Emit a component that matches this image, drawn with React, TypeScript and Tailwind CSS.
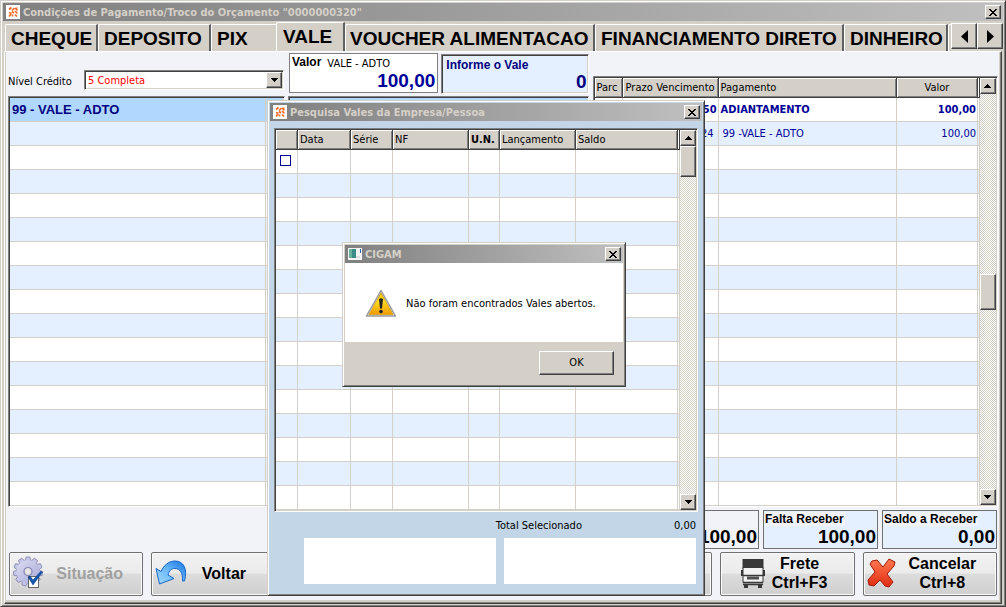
import React, { useState } from 'react';

const raised =
  'border border-t-white border-l-white border-r-[#404040] border-b-[#404040] shadow-[inset_-1px_-1px_0_#808080] bg-[#d4d0c8]';
const sunken =
  'border border-t-[#808080] border-l-[#808080] border-r-white border-b-white shadow-[inset_1px_1px_0_#404040,inset_-1px_-1px_0_#d4d0c8] p-px';
const frame =
  'border border-t-[#d4d0c8] border-l-[#d4d0c8] border-r-[#404040] border-b-[#404040] shadow-[inset_1px_1px_0_#fff,inset_-1px_-1px_0_#808080] p-[2px]';
const ui = "font-['DejaVu_Sans_Condensed','DejaVu_Sans',sans-serif] text-[11px] leading-[14px]";

const TABS = [
  { name: 'CHEQUE', size: 'w-[93px] pl-[5px]' },
  { name: 'DEPOSITO', size: 'w-[113px] pl-[5px]' },
  { name: 'PIX', size: 'w-[65px] pl-[5px]' },
  { name: 'VALE', size: 'w-[69px] pl-[6px]' },
  { name: 'VOUCHER ALIMENTACAO', size: 'w-[250px] pl-[4px]' },
  { name: 'FINANCIAMENTO DIRETO', size: 'w-[249px] pl-[5px]' },
  { name: 'DINHEIRO', size: 'w-[104px] pl-[5px]' },
];

const Arrow = ({ dir }: { dir: 'up' | 'down' }) => (
  <svg width="7" height="4" viewBox="0 0 7 4" shapeRendering="crispEdges">
    <path d={dir === 'up' ? 'M3 0h1v1h1v1h1v1h1v1H0V3h1V2h1V1h1z' : 'M0 0h7v1H6v1H5v1H4v1H3V3H2V2H1V1H0z'} />
  </svg>
);

const AppLogo = () => (
  <svg width="14" height="14" viewBox="0 0 14 14" className="shrink-0">
    <rect width="14" height="14" fill="#fff" />
    <g stroke="#f26a24" strokeWidth="1.7" fill="none">
      <path d="M3 4.500 5.500 2.500M6 5.500l2.500-2.500M9 3l2.500 2.500M3 7.500l2.500 1M6 6.500l2 1.500M9 6l2.500 2.500M3 11.500l2-2.500M6.500 11.500V9.500M9 9.500l2 2M11 2.500v1" />
    </g>
  </svg>
);

const CloseButton = () => (
  <button aria-label="Fechar" className={`${raised} w-4 h-[14px] flex items-center justify-center shrink-0`}>
    <svg width="8" height="7" viewBox="0 0 8 7" shapeRendering="crispEdges">
      <path d="M0 0h2v1h1v1h2V1h1V0h2v1H7v1H6v1H5v1h1v1h1v1h1v1H6V6H5V5H3v1H2v1H0V6h1V5h1V4h1V3H2V2H1V1H0z" />
    </svg>
  </button>
);

const TitleBar = ({ title, icon }: { title: string; icon: React.ReactNode }) => (
  <div className="h-[18px] shrink-0 flex items-center gap-[3px] pl-[3px] pr-[2px] bg-linear-to-r from-[#808080] to-[#c0c0c0]">
    {icon}
    <h2 className={`${ui} flex-1 pt-[2px] font-bold text-[#d4d0c8] whitespace-nowrap`}>{title}</h2>
    <CloseButton />
  </div>
);

const ScrollBar = ({ middle }: { middle?: boolean }) => (
  <div className="w-4 shrink-0 flex flex-col bg-[repeating-conic-gradient(#fff_0_25%,#d4d0c8_0_50%)] bg-[length:2px_2px]">
    <button aria-label="Subir" className={`${raised} h-4 flex items-center justify-center`}><Arrow dir="up" /></button>
    {middle && <div className="flex-1" />}
    <div className={middle ? `${raised} h-9` : `${raised} h-[31px]`} />
    <div className="flex-1" />
    <button aria-label="Descer" className={`${raised} h-4 flex items-center justify-center`}><Arrow dir="down" /></button>
  </div>
);

const Th = ({ children, align = 'text-left pl-[2px]' }: { children?: React.ReactNode; align?: string }) => (
  <th className={`h-5 p-0 font-normal bg-[#d4d0c8] border-b border-r border-[#404040] shadow-[inset_1px_1px_0_#fff,inset_-1px_-1px_0_#808080] whitespace-nowrap ${align}`}>
    {children}
  </th>
);

const cell = 'h-6 p-0 border-b border-r border-[#d4d0c8]';

const EmptyRows = ({ count, cols, startOdd }: { count: number; cols: number; startOdd?: boolean }) => (
  <>
    {Array.from({ length: count }, (_, r) => (
      <tr key={r} className={(r % 2 === 1) === !startOdd ? 'bg-white' : 'bg-[#e4f0ff]'}>
        {Array.from({ length: cols }, (_, c) => <td key={c} className={cell} />)}
      </tr>
    ))}
  </>
);

const PaymentsTable = () => (
  <div className={`${sunken} flex-1 min-h-0 flex bg-white overflow-hidden`}>
    <div className="flex-1 overflow-hidden">
      <table className={`${ui} w-full table-fixed border-separate border-spacing-0 text-[#000099]`}>
        <colgroup>
          <col className="w-7" /><col className="w-24" />
          <col /><col className="w-[81px]" /><col className="w-[2px]" />
        </colgroup>
        <thead className="text-black">
          <tr>
            <Th>Parc</Th>
            <Th>
              <span className="flex justify-between pl-px pr-[3px]"><span>Prazo</span><span>Vencimento</span></span>
            </Th>
            <Th>Pagamento</Th>
            <Th align="text-center">Valor</Th>
            <Th align="" />
          </tr>
        </thead>
        <tbody>
          <tr className="bg-white font-bold">
            <td className={cell} />
            <td className={`${cell} text-right pr-px`}>50</td>
            <td className={`${cell} pl-[2px]`}>ADIANTAMENTO</td>
            <td className={`${cell} text-right pr-px`}>100,00</td>
            <td className={cell} />
          </tr>
          <tr className="bg-[#e4f0ff]">
            <td className={cell} />
            <td className={`${cell} text-right pr-1`}>24</td>
            <td className={`${cell} pl-1`}>99 -VALE - ADTO</td>
            <td className={`${cell} text-right pr-px`}>100,00</td>
            <td className={cell} />
          </tr>
          <EmptyRows count={16} cols={5} startOdd />
        </tbody>
      </table>
    </div>
    <ScrollBar middle />
  </div>
);

const AmountBox = ({ label, value, tint }: { label: string; value: string; tint?: boolean }) => (
  <div className={`w-[115px] border border-[#707070] px-px pb-px flex flex-col justify-between ${tint ? 'bg-[#e4f0ff]' : ''}`}>
    <span className="text-xs leading-4 font-bold whitespace-nowrap">
      {label && <span className="bg-[#f2f3f9] pr-px">{label}</span>}
    </span>
    <output className="text-[19px] leading-5 font-bold text-right">{value}</output>
  </div>
);

interface ActionButtonProps {
  icon?: React.ReactNode;
  children?: React.ReactNode;
  disabled?: boolean;
  pad?: string;
}

const ActionButton = ({ icon, children, disabled, pad = '' }: ActionButtonProps) => (
  <button
    disabled={disabled}
    className={`min-w-0 flex items-center pb-[2px] border border-[#707070] rounded-[2px] shadow-[inset_0_0_0_1px_#fafafa] bg-[linear-gradient(#f2f2f2,#ebebeb_48%,#dcdcdc_50%,#cfcfcf)] font-bold text-base leading-[19px] disabled:text-[#a0a0a0] ${pad}`}
  >
    {icon}
    <span className="flex-1">{children}</span>
  </button>
);

const GearIcon = () => (
  <svg width="32" height="34" viewBox="0 0 32 34" className="shrink-0">
    <defs>
      <linearGradient id="gear" x1="0" y1="0" x2="1" y2="1">
        <stop offset="0" stopColor="#dcdcf4" />
        <stop offset="1" stopColor="#a9a9d8" />
      </linearGradient>
    </defs>
    <g transform="translate(15 15.500)">
      <g fill="#c6c6e8" stroke="#8484b0" strokeWidth=".8">
        {Array.from({ length: 11 }, (_, i) => (
          <path key={i} d="M-3 -10.500 -1.900 -14.500H1.900L3 -10.500z" transform={`rotate(${(i * 360) / 11})`} />
        ))}
      </g>
      <circle r="11.500" fill="url(#gear)" />
      <circle r="4" fill="#e6e6e6" stroke="#8484b0" strokeWidth="1.200" />
    </g>
    <rect x="15.500" y="20.500" width="10" height="11" fill="#fff" stroke="#666" />
    <path d="m15 21 2-1 3 4 8-9 1.500 1L20 29z" fill="#1455ad" stroke="#0c3f8c" strokeWidth=".5" />
  </svg>
);

const BackIcon = () => (
  <svg width="32" height="28" viewBox="0 0 32 28" className="shrink-0">
    <defs>
      <linearGradient id="back" x1="0" y1="1" x2="1" y2="0">
        <stop offset="0" stopColor="#a8dcff" />
        <stop offset=".5" stopColor="#6ab8fa" />
        <stop offset="1" stopColor="#1474e0" />
      </linearGradient>
    </defs>
    <path d="M1 9.500 6 12.500C9 6 14 2 20 2c8 0 13 7 9.500 20h-2C28 14 25 9.500 20 9.500c-4 0-6 2.500-7 6.500l6 3.500L4.500 25z" fill="url(#back)" stroke="#1668c8" strokeLinejoin="round" />
  </svg>
);

const TruckIcon = () => (
  <svg width="24" height="30" viewBox="0 0 24 30" className="shrink-0">
    <path d="M1.500 1h21v10h-21z" fill="#383838" />
    <path d="M2 9.500h20v15H2z" fill="#f2f2f2" stroke="#383838" />
    <path d="M0 12h2v6H0zM22 12h2v6h-2zM3 26h4v4H3zM17 26h4v4h-4z" fill="#383838" />
    <path d="M2 17.500h20M2 24.500h20M2 26.500h20" stroke="#383838" strokeWidth="1.500" />
    <path d="M6 18.500h12v3H6z" fill="#505050" />
  </svg>
);

const CancelIcon = () => (
  <svg width="30" height="31" viewBox="0 0 30 31" className="shrink-0">
    <defs>
      <linearGradient id="cancel" x1="0" y1="0" x2="0" y2="1">
        <stop offset="0" stopColor="#ff7a52" />
        <stop offset="1" stopColor="#e02c10" />
      </linearGradient>
    </defs>
    <path d="M5 3 10 2l6 7 6-8 6 3-1 4-7 8 6 8-4 5-4-1-5-6-6 6-5-1-1-5 7-8-5-8z" fill="url(#cancel)" stroke="#a31c08" strokeLinejoin="round" />
  </svg>
);

const WarningIcon = () => (
  <svg width="32" height="29" viewBox="0 0 32 29" className="shrink-0">
    <defs>
      <linearGradient id="warn" x1="0" y1="0" x2="0" y2="1">
        <stop offset="0" stopColor="#f5c800" />
        <stop offset=".4" stopColor="#ffdc20" />
        <stop offset="1" stopColor="#f09a00" />
      </linearGradient>
    </defs>
    <path d="M16 1.500 30.500 27h-29z" fill="#e4e4e4" stroke="#9a9a9a" strokeWidth="1.500" strokeLinejoin="round" />
    <path d="M16 4 28 25.500H4z" fill="url(#warn)" stroke="#d89800" strokeWidth=".7" />
    <path d="M14 10q2-1.500 4 0l-1 9.500h-2z" fill="#222" />
    <circle cx="16" cy="22.500" r="1.800" fill="#222" />
  </svg>
);

const VouchersWindow = () => (
  <section className={`${frame} absolute left-[266px] top-[99px] w-[438px] h-[496px] flex flex-col bg-[#c2d6e7]`}>
    <TitleBar title="Pesquisa Vales da Empresa/Pessoa" icon={<AppLogo />} />
    <div className="flex-1 min-h-0 flex flex-col pt-[7px] px-1">
      <div className={`${sunken} h-[384px] flex bg-white`}>
        <div className="flex-1 overflow-hidden">
          <table className={`${ui} w-full table-fixed border-separate border-spacing-0`}>
            <colgroup>
              <col className="w-[22px]" /><col className="w-[53px]" /><col className="w-[42px]" />
              <col className="w-[76px]" /><col className="w-[31px]" /><col className="w-[76px]" />
              <col className="w-[102px]" /><col />
            </colgroup>
            <thead>
              <tr>
                <Th /><Th>Data</Th><Th>Série</Th><Th>NF</Th>
                <Th><b>U.N.</b></Th><Th>Lançamento</Th><Th>Saldo</Th><Th align="" />
              </tr>
            </thead>
            <tbody>
              <tr>
                <td className={cell}>
                  <input type="checkbox" aria-label="Selecionar" className="block appearance-none size-[11px] ml-1 mb-[2px] border border-[#000099] bg-white checked:bg-[#000099]" />
                </td>
                {Array.from({ length: 7 }, (_, i) => <td key={i} className={cell} />)}
              </tr>
              <EmptyRows count={14} cols={8} />
            </tbody>
          </table>
        </div>
        <ScrollBar />
      </div>
      <div className={`${ui} flex justify-end gap-[92px] pt-[7px] pr-[2px]`}>
        <span>Total Selecionado</span>
        <output>0,00</output>
      </div>
      <div className="grid grid-cols-2 gap-2 h-[46px] mt-[5px] ml-[30px] mr-[2px]">
        <div className="bg-white" />
        <div className="bg-white" />
      </div>
    </div>
  </section>
);

const MessageWindow = () => (
  <section role="alertdialog" className={`${frame} absolute left-[341px] top-[241px] w-[284px] flex flex-col bg-[#d4d0c8]`}>
    <TitleBar
      title="CIGAM"
      icon={
        <svg width="14" height="12" viewBox="0 0 14 12" className="shrink-0">
          <path d="M0 0h14v12H0z" fill="#f4f4f4" />
          <path d="M1 1h7v9H1z" fill="#3b8c86" />
          <path d="M1 1h3v9H1z" fill="#6bb09a" />
          <path d="M12 1h1v4h-1z" fill="#2a62b0" />
          <path d="M8 8h4v2H8z" fill="#ddd" />
        </svg>
      }
    />
    <div className="h-[79px] flex items-center gap-[9px] pl-5 pt-[2px] bg-white">
      <WarningIcon />
      <p className={`${ui} whitespace-nowrap`}>Não foram encontrados Vales abertos.</p>
    </div>
    <div className="flex justify-end py-[9px] pr-[9px]">
      <button className={`${raised} ${ui} w-[75px] h-6`}>OK</button>
    </div>
  </section>
);

export default function App() {
  const [active, setActive] = useState('VALE');

  return (
    <main className={`${frame} relative h-screen flex flex-col overflow-hidden bg-[#d4d0c8] font-['Liberation_Sans',Arial,sans-serif] text-black`}>
      <TitleBar title={'Condições de Pagamento/Troco do Orçamento "0000000320"'} icon={<AppLogo />} />

      {/* Tabs */}
      <nav className="h-[30px] shrink-0 flex items-end pl-[2px]">
        {TABS.map((tab) => (
          <button
            key={tab.name}
            onClick={() => setActive(tab.name)}
            className={`${tab.size} shrink-0 text-left text-[19px] leading-6 font-bold whitespace-nowrap border-t border-l border-white rounded-tl-[2px] ${
              active === tab.name ? 'h-[29px] pb-px' : 'h-[27px] pt-px'
            } ${tab.name === 'PIX' ? '' : 'border-r-2 border-r-[#606060]'}`}
          >
            {tab.name}
          </button>
        ))}
        <div className="flex-1 h-[27px] border-t border-l border-white rounded-tl-[2px]" />
        <div className="flex self-start pt-[2px]">
          <button aria-label="Anterior" className={`${raised} w-[26px] h-[26px] flex items-center justify-center`}>
            <svg width="7" height="13" viewBox="0 0 7 13"><path d="M7 0v13L0 6.500z" /></svg>
          </button>
          <button aria-label="Próxima" className={`${raised} w-[26px] h-[26px] flex items-center justify-center`}>
            <svg width="7" height="13" viewBox="0 0 7 13"><path d="M0 0v13l7-6.500z" /></svg>
          </button>
        </div>
      </nav>

      <div className="flex-1 min-h-0 mx-px flex flex-col border border-t-white border-l-white border-r-[#404040] border-b-[#404040] shadow-[inset_-1px_-1px_0_#808080,inset_1px_0_0_#d4d0c8,inset_-2px_-3px_0_#d4d0c8] bg-[#f2f3f9] px-[3px] pb-[7px]">
        <div className="flex-1 min-h-0 grid grid-cols-[580fr_405fr] gap-1">
          <div className="min-h-0 flex flex-col">
            {/* Filters */}
            <div className="h-[44px] shrink-0 flex">
              <label htmlFor="nivel" className={`${ui} w-[76px] mt-[23px]`}>Nível Crédito</label>
              <div className={`${sunken} relative w-[200px] h-5 mt-[18px] mr-[5px] bg-white`}>
                <select id="nivel" className={`${ui} block appearance-none w-full h-4 pt-[2px] pl-[2px] text-[#ff0000] outline-none`}>
                  <option>5 Completa</option>
                </select>
                <span className={`${raised} pointer-events-none absolute right-px top-px w-4 h-4 flex items-center justify-center`}>
                  <Arrow dir="down" />
                </span>
              </div>
              <div className="flex-1 h-10 mt-px mr-[3px] px-[2px] pb-px flex flex-col justify-between border border-[#808080] bg-white">
                <div className="flex gap-[6px] leading-4">
                  <span className="text-xs leading-4 font-bold">Valor</span>
                  <span className={`${ui} pt-[3px]`}>VALE - ADTO</span>
                </div>
                <output className="text-[19px] leading-5 font-bold text-right text-[#000099]">100,00</output>
              </div>
              <div className={`${sunken} flex-1 h-10 mt-[2px] flex flex-col bg-[#e4f0ff] text-[#000080] font-bold`}>
                <label htmlFor="vale" className="pl-[3px] pt-px text-xs leading-4">Informe o Vale</label>
                <input id="vale" defaultValue="0" className="w-full h-[18px] text-[19px] leading-[18px] text-right outline-none" />
              </div>
            </div>

            {/* Lists */}
            <div className="flex-1 min-h-0 flex gap-[3px]">
              <div className={`${sunken} w-[277px] bg-white overflow-hidden`}>
                <table className="w-full table-fixed border-separate border-spacing-0">
                  <colgroup><col className="w-[256px]" /><col /></colgroup>
                  <tbody>
                    <tr className="bg-[#b0d8ff] text-[13px] leading-4 font-bold text-[#000080]">
                      <td className={`${cell} pl-[2px]`}>99 - VALE - ADTO</td>
                      <td className={cell} />
                    </tr>
                    <EmptyRows count={17} cols={2} />
                  </tbody>
                </table>
              </div>
              <div className={`${sunken} flex-1 bg-[#b0d8ff]`} />
            </div>
          </div>

          <div className="min-h-0 flex flex-col pt-6">
            <PaymentsTable />
          </div>
        </div>

        {/* Totals */}
        <div className="shrink-0 h-[39px] mt-[3px] pr-px flex justify-end gap-1">
          <AmountBox label="" value="100,00" />
          <AmountBox label="Falta Receber" value="100,00" tint />
          <AmountBox label="Saldo a Receber" value="0,00" tint />
        </div>

        {/* Actions */}
        <div className="shrink-0 h-11 mt-[3px] mx-px grid grid-cols-7 gap-2">
          <ActionButton icon={<GearIcon />} pad="pl-[3px] pr-2" disabled>Situação</ActionButton>
          <ActionButton icon={<BackIcon />} pad="pl-[3px] pr-6">Voltar</ActionButton>
          <ActionButton />
          <ActionButton />
          <ActionButton />
          <ActionButton icon={<TruckIcon />} pad="pl-5 pr-5">Frete<br />Ctrl+F3</ActionButton>
          <ActionButton icon={<CancelIcon />} pad="pl-[3px] pr-2">Cancelar<br />Ctrl+8</ActionButton>
        </div>
      </div>

      <VouchersWindow />
      <MessageWindow />
    </main>
  );
}
